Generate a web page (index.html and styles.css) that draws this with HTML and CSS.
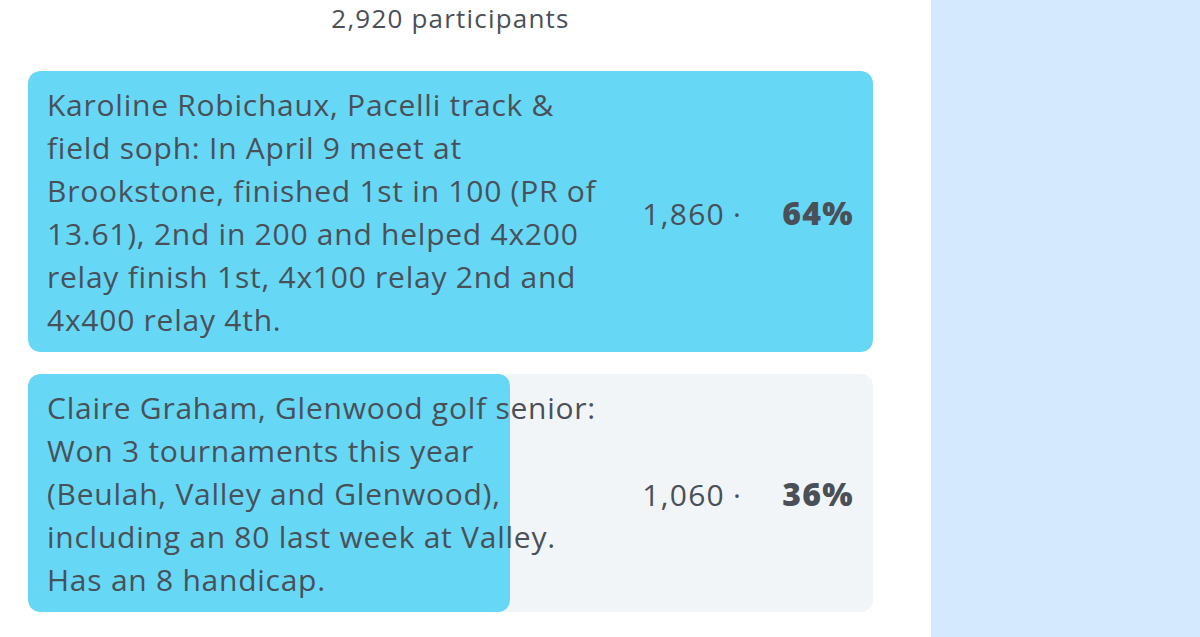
FILE: index.html
```html
<!DOCTYPE html>
<html lang="en">
<head>
    <meta charset="UTF-8">
    <meta name="viewport" content="width=device-width, initial-scale=1.0">
    <title>Poll results</title>
    <link rel="stylesheet" href="styles.css">
</head>
<body>
    <div class="page">
        <div class="poll">
            <div class="poll-total">2,920 participants</div>
            <div class="poll-options">
                <div class="option">
                    <div class="option-bar" style="width: 100%"></div>
                    <div class="option-text">Karoline Robichaux, Pacelli track &amp; field soph: In April 9 meet at Brookstone, finished 1st in 100 (PR of 13.61), 2nd in 200 and helped 4x200 relay finish 1st, 4x100 relay 2nd and 4x400 relay 4th.</div>
                    <div class="option-result">
                        <span class="votes">1,860</span>
                        <span class="dot">&middot;</span>
                        <span class="percent">64%</span>
                    </div>
                </div>
                <div class="option">
                    <div class="option-bar" style="width: 57%"></div>
                    <div class="option-text">Claire Graham, Glenwood golf senior: Won 3 tournaments this year (Beulah, Valley and Glenwood), including an 80 last week at Valley. Has an 8 handicap.</div>
                    <div class="option-result">
                        <span class="votes">1,060</span>
                        <span class="dot">&middot;</span>
                        <span class="percent">36%</span>
                    </div>
                </div>
            </div>
        </div>
        <div class="sidebar"></div>
    </div>
</body>
</html>
```

FILE: styles.css
```css
body{
    margin: 0;
    font-family: "Open Sans", Lato, sans-serif;
    color: #4a5058;
    background-color: #fff;
}
.page{
    display: grid;
    grid-template-columns: 931px 1fr;
    height: 637px;
    overflow: hidden;
}
.poll{
    padding: 0 58px 0 28px;
}
.poll-total{
    text-align: center;
    font-size: 26px;
    letter-spacing: 1.2px;
    line-height: 36px;
    margin-bottom: 35px;
}
.poll-options{
    display: flex;
    flex-direction: column;
    gap: 22px;
}
.option{
    position: relative;
    display: flex;
    align-items: center;
    background-color: #f2f5f7;
    border-radius: 12px;
    padding: 12px 20px 11px 19px;
    overflow: hidden;
}
.option-bar{
    position: absolute;
    top: 0;
    left: 0;
    bottom: 0;
    background-color: #66d8f5;
    border-radius: 12px;
}
.option-text{
    position: relative;
    width: 551px;
    font-size: 30px;
    letter-spacing: 0.75px;
    line-height: 43px;
}
.option-result{
    position: relative;
    flex: 1;
    display: flex;
    justify-content: flex-end;
    align-items: baseline;
    font-size: 30px;
    letter-spacing: 1.3px;
}
.dot{
    margin: 0 40px 0 8px;
}
.percent{
    font-size: 32px;
    font-weight: 800;
    letter-spacing: 1.3px;
    margin-right: -1px;
}
.sidebar{
    background-color: #d5e9fe;
}
```
